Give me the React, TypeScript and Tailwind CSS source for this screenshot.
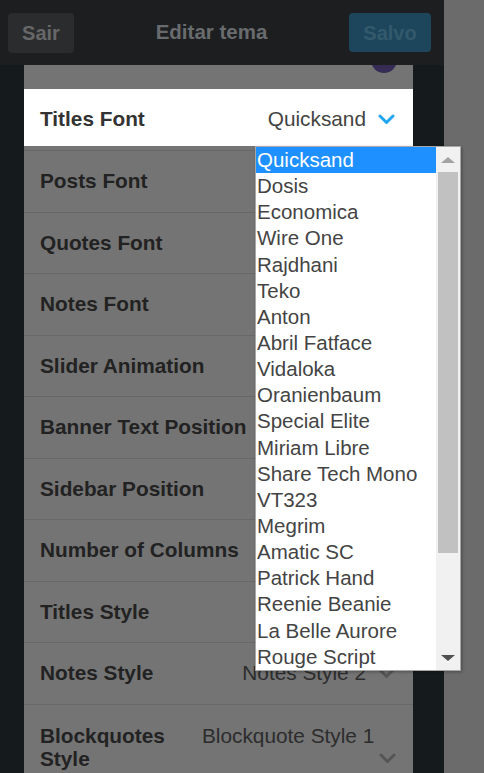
import React from 'react';

const fonts = [
    'Quicksand', 'Dosis', 'Economica', 'Wire One', 'Rajdhani', 'Teko', 'Anton',
    'Abril Fatface', 'Vidaloka', 'Oranienbaum', 'Special Elite', 'Miriam Libre',
    'Share Tech Mono', 'VT323', 'Megrim', 'Amatic SC', 'Patrick Hand',
    'Reenie Beanie', 'La Belle Aurore', 'Rouge Script'
];

const rows = [
    { label: 'Posts Font', value: 'Quicksand' },
    { label: 'Quotes Font', value: 'Quicksand' },
    { label: 'Notes Font', value: 'Quicksand' },
    { label: 'Slider Animation', value: 'Fade' },
    { label: 'Banner Text Position', value: 'Center' },
    { label: 'Sidebar Position', value: 'Right' },
    { label: 'Number of Columns', value: '3' },
    { label: 'Titles Style', value: 'Title Style 1' },
    { label: 'Notes Style', value: 'Notes Style 2' },
];

const Chevron = ({ color }: { color: string }) => (
    <svg width="17" height="11" viewBox="0 0 17 11" className="inline-block shrink-0">
        <polyline points="2,2 8.5,8.5 15,2" fill="none" stroke={color} strokeWidth="3" strokeLinecap="round" strokeLinejoin="round" />
    </svg>
);

const Dropdown = () => (
    <div className="absolute left-[255px] top-[146px] w-[206px] h-[525px] bg-white border border-[#a8a8a8] shadow-[1px_1px_3px_rgba(0,0,0,0.3)] flex z-20">
        <div className="flex-1 flex flex-col">
            {fonts.map((f, i) => (
                <div
                    key={f}
                    className={
                        i === 0
                            ? 'h-[26.15px] leading-[26px] pl-[1px] text-[20.5px] bg-[#1e90ff] text-white whitespace-nowrap'
                            : 'h-[26.15px] leading-[26px] pl-[1px] text-[20.5px] text-[#444] whitespace-nowrap'
                    }
                >
                    {f}
                </div>
            ))}
        </div>
        <div className="w-[24px] bg-[#f1f1f1] flex flex-col items-center">
            <div className="h-[25px] w-full flex items-center justify-center">
                <div className="w-0 h-0 border-l-[7px] border-r-[7px] border-b-[6px] border-l-transparent border-r-transparent border-b-[#a3a3a3]" />
            </div>
            <div className="w-[20px] h-[381px] bg-[#c1c1c1]" />
            <div className="flex-1" />
            <div className="h-[25px] w-full flex items-center justify-center">
                <div className="w-0 h-0 border-l-[7px] border-r-[7px] border-t-[6px] border-l-transparent border-r-transparent border-t-[#505050]" />
            </div>
        </div>
    </div>
);

export default function App() {
    return (
        <div className="relative flex w-[484px] h-[773px] overflow-hidden bg-[#6b6b6b]" style={{ fontFamily: '"Liberation Sans", Arial, sans-serif' }}>
            <div className="w-[444px] flex flex-col bg-[#151a1d]">
                <header className="relative z-10 h-[65px] shrink-0 bg-[#1d1e20] flex items-center justify-between pl-[8px] pr-[13px]">
                    <div className="w-[66px] h-[40px] rounded-[4px] bg-[#2b2c2e] flex items-center justify-center text-[20px] font-bold text-[#666768]">
                        Sair
                    </div>
                    <div className="text-[20.5px] font-bold text-[#696c6e]">Editar tema</div>
                    <div className="w-[82px] h-[39px] rounded-[4px] bg-[#1d465c] flex items-center justify-center text-[20px] font-bold text-[#33596c]">
                        Salvo
                    </div>
                </header>
                <div className="flex-1 pl-[24px] pr-[31px] overflow-hidden">
                    <div className="bg-[#747474] h-full">
                        <div className="relative h-[24px]">
                            <div className="absolute right-[16px] bottom-[16px] w-[26px] h-[26px] rounded-full bg-[#352b54]" />
                        </div>
                        <div className="border-b border-[#686868]">
                            <div className="bg-white h-[57px] pt-[19px] pl-[16px] pr-[18px] flex items-start justify-between text-[20.8px] leading-[22.5px]">
                                <span className="font-bold text-[#333]">Titles Font</span>
                                <span className="flex items-center gap-[12px] text-[#444]">
                                    Quicksand
                                    <Chevron color="#1ea6f0" />
                                </span>
                            </div>
                            <div className="h-[4px]" />
                        </div>
                        {rows.map(r => (
                            <div key={r.label} className="border-b border-[#686868] py-[19px] pl-[16px] pr-[18px] flex items-start justify-between text-[20.8px] leading-[22.5px]">
                                <span className="font-bold text-[#222] whitespace-nowrap">{r.label}</span>
                                <span className="flex items-center gap-[12px] text-[#2c2c2c] whitespace-nowrap">
                                    {r.value}
                                    <Chevron color="#555" />
                                </span>
                            </div>
                        ))}
                        <div className="pt-[19px] pl-[16px] pr-[17px] flex items-start justify-between text-[20.8px] leading-[23px]">
                            <span className="font-bold text-[#222] w-[140px]">Blockquotes Style</span>
                            <span className="w-[194px] flex flex-col text-[#2c2c2c]">
                                <span className="whitespace-nowrap">Blockquote Style 1</span>
                                <span className="self-end h-[23px] flex items-center">
                                    <Chevron color="#555" />
                                </span>
                            </span>
                        </div>
                    </div>
                </div>
            </div>
            <div className="flex-1 bg-[#6b6b6b]" />
            <Dropdown />
        </div>
    );
}
